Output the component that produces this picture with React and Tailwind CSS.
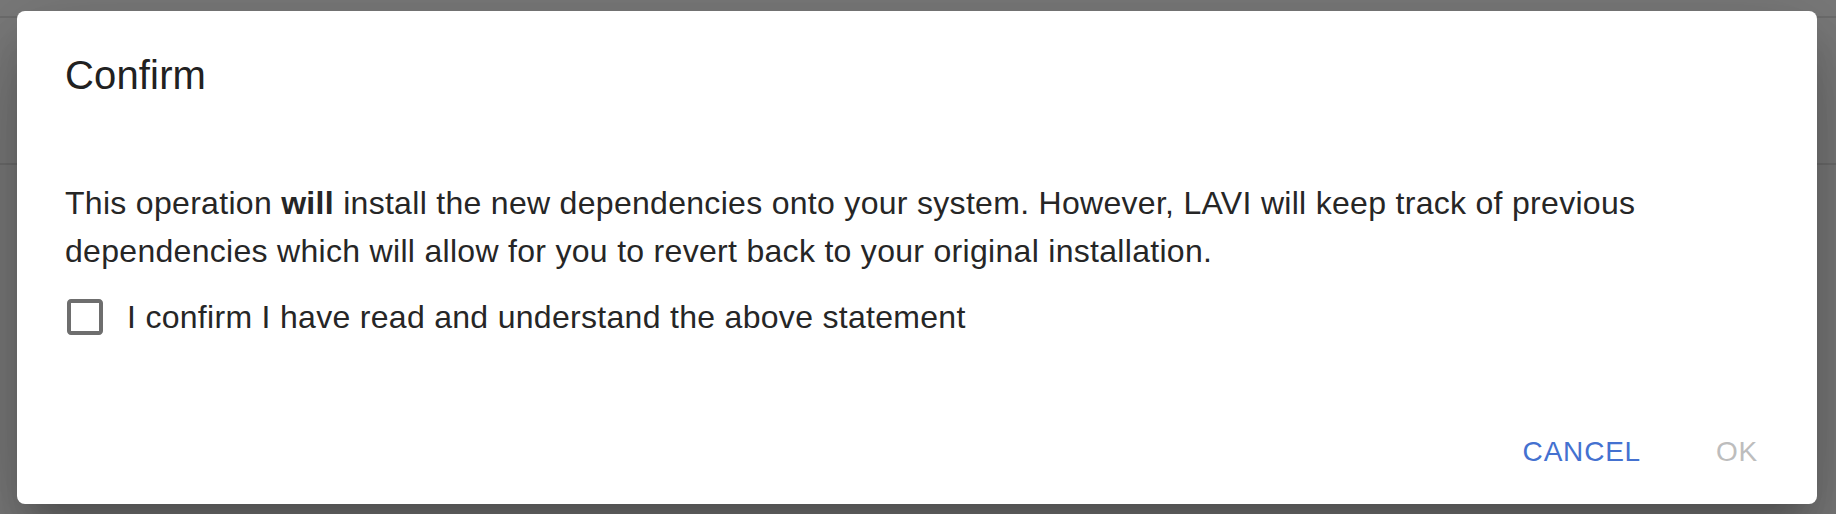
import React from "react";

export default function App() {
  return (
    <div className="relative h-[514px] w-[1836px] overflow-hidden bg-[#f4f4f4] font-['Liberation_Sans',Arial,sans-serif]">
      {/* app content behind the dialog */}
      <div className="h-[18px] border-b-2 border-[#dadada]" />
      <div className="h-[147px] border-b-2 border-[#dadada]" />

      {/* backdrop */}
      <div className="absolute inset-0 bg-black/50 pt-[11px] pl-[17px]">
        <div className="flex h-[493px] w-[1800px] flex-col rounded-[8px] bg-white shadow-[0_22px_30px_-14px_rgba(0,0,0,0.2),0_48px_76px_6px_rgba(0,0,0,0.14),0_18px_92px_16px_rgba(0,0,0,0.12)]">
          <h2 className="px-[48px] pt-[32px] pb-[32px] text-[40px] leading-[64px] font-normal tracking-[0.15px] text-[#212121]">
            Confirm
          </h2>
          <div className="px-[48px] pt-[40px]">
            <p className="text-[32px] leading-[48px] tracking-[0.3px] text-[#262626]">
              This operation <b className="font-bold">will</b> install the new dependencies onto your system. However, LAVI will keep track of previous dependencies which will allow for you to revert back to your original installation.
            </p>
            <label className="-ml-[22px] flex items-center">
              <span className="flex p-[18px]">
                <svg viewBox="0 0 24 24" className="h-[48px] w-[48px] fill-[#6e6e6e]">
                  <path d="M19 5v14H5V5h14m0-2H5c-1.1 0-2 .9-2 2v14c0 1.1.9 2 2 2h14c1.1 0 2-.9 2-2V5c0-1.1-.9-2-2-2z" />
                </svg>
              </span>
              <span className="text-[32px] leading-[48px] tracking-[0.3px] text-[#262626]">
                I confirm I have read and understand the above statement
              </span>
            </label>
          </div>
          <div className="mt-auto flex justify-end gap-[16px] p-[16px]">
            <button className="flex h-[73px] min-w-[128px] items-center justify-center px-[16px] text-[28px] leading-[49px] tracking-[0.8px] text-[#4471d0]">
              CANCEL
            </button>
            <button className="flex h-[73px] min-w-[128px] items-center justify-center px-[16px] text-[28px] leading-[49px] tracking-[0.8px] text-[#bdbdbd]">
              OK
            </button>
          </div>
        </div>
      </div>
    </div>
  );
}
